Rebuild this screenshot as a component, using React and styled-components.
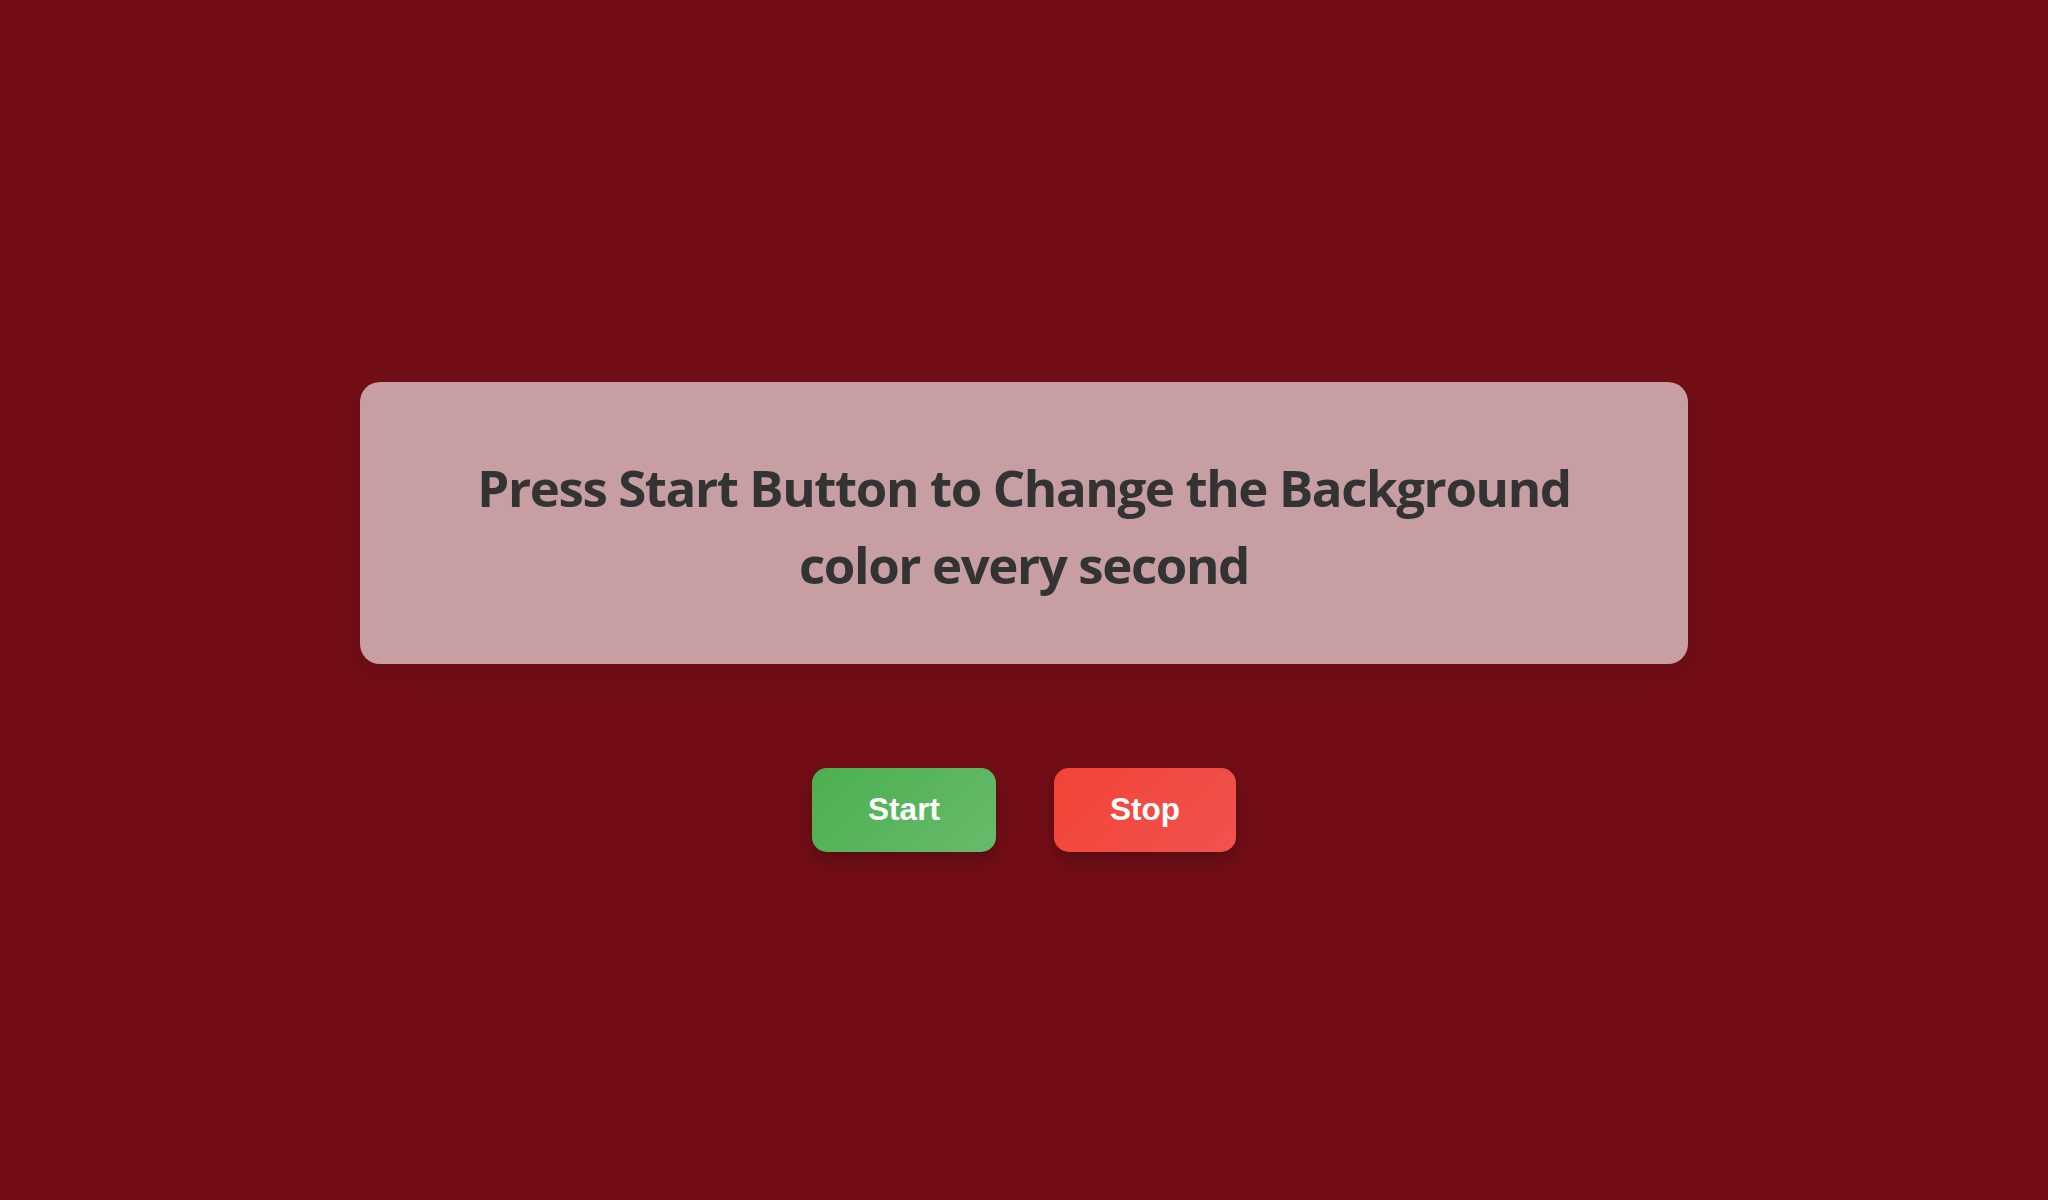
import React from "react";
import styled, { createGlobalStyle } from "styled-components";

const Global = createGlobalStyle`
  html, body { margin: 0; padding: 0; }
  body { background: #730e17; font-family: "Open Sans", "Noto Sans", sans-serif; }
`;

const Page = styled.main`
  min-height: 1200px;
  box-sizing: border-box;
  padding-top: 382px;
  display: flex;
  flex-direction: column;
  align-items: center;
`;

const Card = styled.section`
  width: 1328px;
  box-sizing: border-box;
  padding: 67px 40px 61px;
  background: rgba(255, 255, 255, 0.6);
  border-radius: 20px;
  box-shadow: 0 8px 32px rgba(0, 0, 0, 0.12);
`;

const Title = styled.h1`
  margin: 0;
  text-align: center;
  color: #333;
  font-family: "Open Sans", "Noto Sans", sans-serif;
  font-weight: 700;
  font-size: 51px;
  line-height: 76.8px;
  letter-spacing: -1.4px;
`;

const Buttons = styled.div`
  display: flex;
  gap: 58px;
  margin-top: 104px;
`;

const Button = styled.button`
  width: ${(p) => p.$w}px;
  height: 84px;
  padding: 0 0 1px;
  border: none;
  border-radius: 15px;
  background: ${(p) => p.$bg};
  color: #fff;
  font-family: "Liberation Sans", Arial, sans-serif;
  font-weight: 700;
  font-size: 31.5px;
  cursor: pointer;
  box-shadow: 0 8px 20px rgba(0, 0, 0, 0.25);
`;

export default function App() {
  return (
    <>
      <Global />
      <Page>
        <Card>
          <Title>
            Press Start Button to Change the Background
            <br />
            color every second
          </Title>
        </Card>
        <Buttons>
          <Button $w={184} $bg="linear-gradient(135deg, #4caf50, #66bb6a)">Start</Button>
          <Button $w={182} $bg="linear-gradient(135deg, #f44336, #ef5350)">Stop</Button>
        </Buttons>
      </Page>
    </>
  );
}
